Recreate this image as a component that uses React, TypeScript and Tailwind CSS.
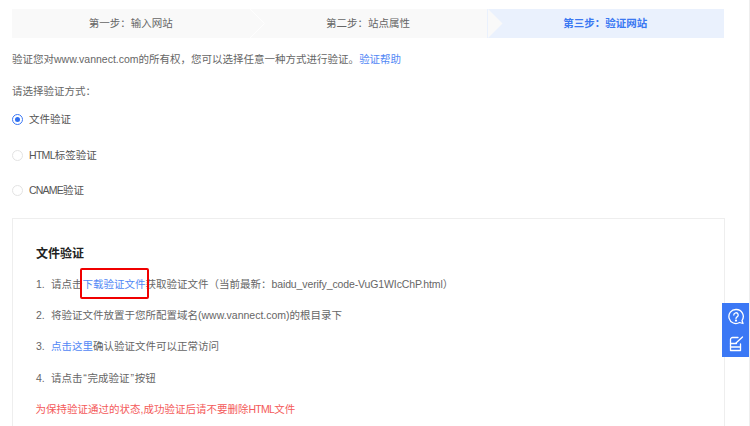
const font = { fontFamily: '"Liberation Sans", "Noto Sans CJK SC", sans-serif' };

function StepArrow({ left, edge }: { left: string; edge?: boolean }) {
  return (
    <svg width="16" height="29" viewBox="0 0 16 29" className="absolute top-0" style={{ left }}>
      <path d="M0 0 L14.5 14.5 L0 29 Z" fill="#f9f9f9" />
      {edge && <path d="M0 0 L14.5 14.5 L0 29" fill="none" stroke="#ffffff" strokeWidth="0.8" />}
    </svg>
  );
}

function Radio({ checked, label }: { checked?: boolean; label: React.ReactNode }) {
  return (
    <div className="flex items-center h-[12px] gap-[6px]">
      <span
        className={`w-[11px] h-[11px] mt-[1px] rounded-full border flex items-center justify-center bg-white ${
          checked ? "border-[#3b78f5]" : "border-[#e3e3e3]"
        }`}
      >
        {checked && <span className="w-[5px] h-[5px] rounded-full bg-[#2f6ff0]" />}
      </span>
      <span className="text-[10.5px] leading-[12px] text-[#555]">{label}</span>
    </div>
  );
}

function Item({ n, children }: { n: number; children: React.ReactNode }) {
  return (
    <div className="flex h-[12px] items-center text-[10.5px] leading-[12px] text-[#666]">
      <span className="w-[15px]">{n}.</span>
      <span>{children}</span>
    </div>
  );
}

export default function App() {
  return (
    <div className="relative w-[750px] h-[426px] overflow-hidden bg-white" style={font}>
      <div className="absolute top-0 bottom-0 left-[749px] w-px bg-[#eeeeee]" />

      <div className="w-[713px] ml-[12px] pt-[9px]">
        <div className="relative w-[712px] grid grid-cols-3 h-[29px] text-[10.5px] leading-[29px] text-[#666]">
          <div className="bg-[#f9f9f9] text-center">第一步：输入网站</div>
          <div className="bg-[#f9f9f9] text-center">第二步：站点属性</div>
          <div className="bg-[#eaf1fd] text-center font-bold text-[#3a78f2]">第三步：验证网站</div>
          <StepArrow left="238px" edge />
          <StepArrow left="476px" />
        </div>

        <p className="mt-[15px] text-[10.5px] leading-[12px] text-[#666]">
          验证您对www.vannect.com的所有权，您可以选择任意一种方式进行验证。
          <span className="text-[#5288f5]">验证帮助</span>
        </p>
        <p className="mt-[20px] text-[10.5px] leading-[12px] text-[#666]">请选择验证方式：</p>

        <div className="mt-[16px] flex flex-col gap-[23.6px]">
          <Radio checked label="文件验证" />
          <Radio label={<><span className="tracking-[-0.7px]">HTML</span>标签验证</>} />
          <Radio label={<><span className="tracking-[-0.8px]">CNAME</span>验证</>} />
        </div>

        <div className="mt-[22px] h-[260px] border border-[#eeeeee] pl-[23px] pt-[28px]">
          <h3 className="text-[12px] leading-[14px] font-bold text-[#222]">文件验证</h3>
          <div className="mt-[16.6px] flex flex-col gap-[19.3px]">
            <Item n={1}>
              请点击<span className="text-[#5288f5]">下载验证文件</span>获取验证文件（当前最新：
              <span className="tracking-[-0.12px]">baidu_verify_code-VuG1WIcChP.html</span>）
            </Item>
            <Item n={2}>将验证文件放置于您所配置域名(www.vannect.com)的根目录下</Item>
            <Item n={3}>
              <span className="text-[#5288f5]">点击这里</span>确认验证文件可以正常访问
            </Item>
            <Item n={4}>
              请点击<span className="px-[0.8px]">“</span>完成验证<span className="px-[0.8px]">”</span>按钮
            </Item>
          </div>
          <p className="mt-[19.5px] -ml-[0.5px] text-[10.5px] leading-[12px] text-[#f45a5a]">
            为保持验证通过的状态,成功验证后请不要删除<span className="tracking-[-0.7px]">HTML</span>文件
          </p>
        </div>
      </div>

      {/* red annotation */}
      <div className="absolute left-[80px] top-[268px] w-[69px] h-[31px] border-2 border-[#f00000] rounded-[2px]" />

      {/* floating help widget */}
      <div className="absolute left-[722px] top-[303px] w-[27px] h-[54px] bg-[#3b78f5] flex flex-col items-center justify-center gap-[9px]">
        <svg width="18" height="18" viewBox="0 0 18 18" fill="none" stroke="#fff" strokeWidth="1.3">
          <path d="M9 1.5a7 7 0 1 0 3.5 13l3.5 1-1-3A7 7 0 0 0 9 1.5Z" strokeLinejoin="round" />
          <path d="M6.8 7a2.2 2.2 0 1 1 3.3 1.9c-.7.4-1.1.8-1.1 1.6" strokeLinecap="round" />
          <circle cx="9" cy="12.6" r="0.5" fill="#fff" />
        </svg>
        <svg width="18" height="18" viewBox="0 0 18 18" fill="none" stroke="#fff" strokeWidth="1.3" strokeLinecap="round" strokeLinejoin="round">
          <path d="M11 2.5H5.5a2 2 0 0 0-2 2v11h10V9" />
          <path d="M3.5 8.5h6M3.5 12h10" />
          <path d="M9 8l6.5-6" />
        </svg>
      </div>
    </div>
  );
}
